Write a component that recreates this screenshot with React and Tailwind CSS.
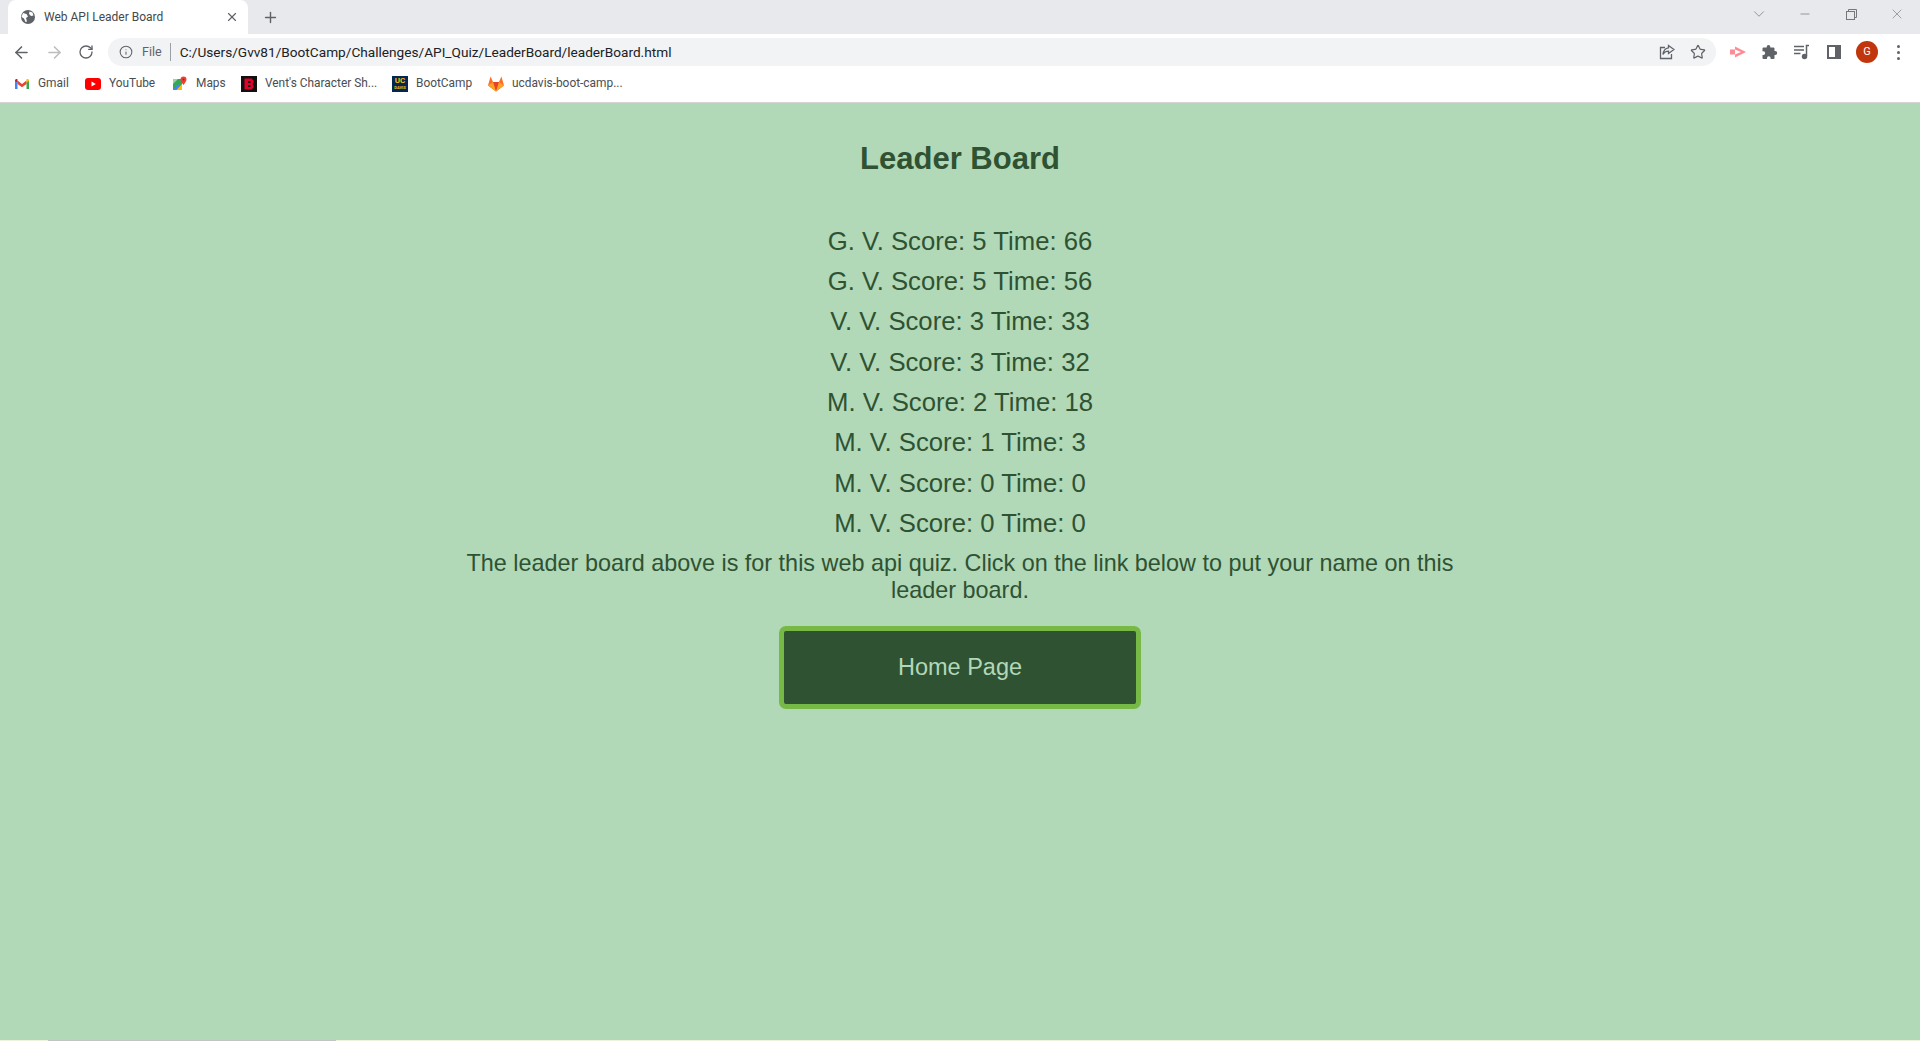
import React from "react";
import { ArrowLeft, ArrowRight, RotateCw, Info, Star, X, Plus, ChevronDown, Minus } from "lucide-react";

const scores = [
  "G. V. Score: 5 Time: 66",
  "G. V. Score: 5 Time: 56",
  "V. V. Score: 3 Time: 33",
  "V. V. Score: 3 Time: 32",
  "M. V. Score: 2 Time: 18",
  "M. V. Score: 1 Time: 3",
  "M. V. Score: 0 Time: 0",
  "M. V. Score: 0 Time: 0",
];

const GmailIcon = () => (
  <svg width="16" height="16" viewBox="0 0 16 16">
    <path d="M1 13V4l2.500 1.500V13z" fill="#4285f4" />
    <path d="M15 13V4l-2.500 1.500V13z" fill="#34a853" />
    <path d="M3.500 8V4.500L8 8l4.500-3.500V8L8 11.300z" fill="#ea4335" />
    <path d="M1 4.500C1 3 2.500 2.500 3.500 3.300V6.500L1 5z" fill="#c5221f" />
    <path d="M15 4.500C15 3 13.500 2.500 12.500 3.300V6.500L15 5z" fill="#fbbc04" />
  </svg>
);

const YoutubeIcon = () => (
  <svg width="16" height="16" viewBox="0 0 16 16">
    <rect x="0" y="2" width="16" height="12" rx="3" fill="#f00" />
    <path d="M6.500 5.500v5L10.800 8z" fill="#fff" />
  </svg>
);

const MapsIcon = () => (
  <svg width="16" height="16" viewBox="0 0 16 16">
    <path d="M1 3h9v11H1z" fill="#34a853" />
    <path d="M1 3h5L1 8z" fill="#9fd0ae" />
    <path d="M1 14l5-6 4 6z" fill="#4285f4" />
    <path d="M4.500 14L10 8v6z" fill="#fbbc04" />
    <path d="M11.500 0.500a3 3 0 0 1 3 3c0 2-3 5.500-3 5.500s-3-3.500-3-5.500a3 3 0 0 1 3-3z" fill="#ea4335" />
    <circle cx="11.500" cy="3.500" r="1" fill="#a52714" />
  </svg>
);

const VentIcon = () => (
  <svg width="16" height="16" viewBox="0 0 16 16">
    <rect width="16" height="16" fill="#111" />
    <path d="M3.500 2.500h7l2 2v2l-1 1.500 1 1.500v2l-2 2h-7zM7 5v2h2.500V5zM7 9v2h2.500V9z" fill="#e4002b" fillRule="evenodd" />
  </svg>
);

const UcIcon = () => (
  <div className="flex h-4 w-4 flex-col items-center justify-center bg-[#022851] text-[#ffbf00]">
    <span className="text-[8px] leading-[8px] font-bold">UC</span>
    <span className="text-[4px] leading-[5px] font-bold">DAVIS</span>
  </div>
);

const GitlabIcon = () => (
  <svg width="16" height="16" viewBox="0 0 16 16">
    <path d="M8 15.500L0 9.500 2.600 0.500 5 6h6l2.400-5.500L16 9.500z" fill="#fc6d26" />
    <path d="M8 15.500L5 6h6z" fill="#e24329" />
    <path d="M8 15.500L0 9.500 5 6zM8 15.500l8-6L11 6z" fill="#fca326" />
  </svg>
);

const GlobeIcon = () => (
  <svg width="16" height="16" viewBox="0 0 16 16">
    <circle cx="8" cy="8" r="7" fill="#5f6368" />
    <path d="M3 4l3.500 1L8 7.500 6 9l1 3.500-1.500.5L4 9.500 1.500 8zM9.500 2.500L12.500 3.500l1 3-2.500.5L9 5z" fill="#fff" />
  </svg>
);

const ShareIcon = () => (
  <svg width="16" height="16" viewBox="0 0 16 16" fill="none" stroke="#5f6368" strokeWidth="1.300">
    <path d="M6 3.500H1.500v11h11V10" />
    <path d="M9.500 1.500L15 5.500 9.500 9.500V7.200C7 7.200 5 8.500 4 10.500 4.300 7 6.500 4.200 9.500 3.800z" />
  </svg>
);

const PinkExtension = () => (
  <svg width="16" height="16" viewBox="0 0 16 16">
    <path d="M5 2.500L16 8 5 13.500V10.500L11 8 5 5.500z" fill="#ff8a94" />
    <rect x="0" y="5.500" width="5" height="5" fill="#ff8a94" />
  </svg>
);

const PuzzleIcon = () => (
  <svg width="16" height="16" viewBox="0 0 16 16">
    <path d="M6.500 1a1.800 1.800 0 0 1 1.800 1.800V3.500h3.200a1 1 0 0 1 1 1v2.600h.7a2 2 0 0 1 0 4h-.7v2.900a1 1 0 0 1-1 1H8.600v-.9a1.800 1.800 0 0 0-3.600 0v.9H1.500a1 1 0 0 1-1-1v-3h.8a1.900 1.900 0 0 0 0-3.800H.5V4.500a1 1 0 0 1 1-1h3.200v-.7A1.800 1.800 0 0 1 6.500 1z" fill="#5f6368" />
  </svg>
);

const MediaIcon = () => (
  <svg width="16" height="16" viewBox="0 0 16 16" fill="none" stroke="#5f6368" strokeWidth="1.500">
    <path d="M0 2.500h10M0 6h10M0 9.500h6.500" />
    <path d="M12.500 12V1.500H15" />
    <circle cx="10.500" cy="12.500" r="2" fill="#5f6368" />
  </svg>
);

const SidePanelIcon = () => (
  <svg width="14" height="14" viewBox="0 0 14 14">
    <path d="M0 0h14v14H0zM2 2v10h6V2z" fill="#5f6368" fillRule="evenodd" />
  </svg>
);

const RestoreIcon = () => (
  <svg width="11" height="11" viewBox="0 0 11 11" fill="none" stroke="#777" strokeWidth="1">
    <rect x="0.500" y="2.500" width="8" height="8" />
    <path d="M2.500 2.500V0.500h8v8H8.500" />
  </svg>
);

const Bookmark = ({ icon, label, className }) => (
  <div className={`flex items-center gap-2 ${className}`}>
    {icon}
    <span className="text-[11.900px] text-[#4a4d51] whitespace-nowrap">{label}</span>
  </div>
);

const App = () => {
  return (
    <div className="flex h-screen flex-col overflow-hidden font-['Roboto',sans-serif]">
      {/* Tab strip */}
      <div className="flex h-[34px] shrink-0 items-center bg-[#e8e9ed]">
        <div className="ml-[8px] flex h-[34px] w-[240px] items-center self-end rounded-t-[8px] bg-white pl-[12px] pr-[9px]">
          <GlobeIcon />
          <span className="ml-[8px] flex-1 text-[12px] text-[#45484c]">Web API Leader Board</span>
          <X size={14} color="#5f6368" strokeWidth={2} />
        </div>
        <Plus size={17} color="#5f6368" strokeWidth={2} className="ml-[14px]" />
        <div className="flex-1" />
        {/* window controls */}
        <div className="mb-[6px] flex items-center">
          <ChevronDown size={18} color="#8a8b8e" strokeWidth={1.2} />
          <Minus size={14} color="#777" strokeWidth={1.2} className="ml-[30px]" />
          <div className="ml-[34px]">
            <RestoreIcon />
          </div>
          <X size={16} color="#777" strokeWidth={1} className="ml-[32px] mr-[15px]" />
        </div>
      </div>

      {/* Toolbar */}
      <div className="flex h-[36px] shrink-0 items-center bg-white">
        <ArrowLeft size={19} color="#5f6368" strokeWidth={2} className="ml-[12px]" />
        <ArrowRight size={19} color="#bcbdbf" strokeWidth={2} className="ml-[14px]" />
        <RotateCw size={16} color="#5f6368" strokeWidth={2} className="ml-[14px]" />
        <div className="ml-[14px] flex h-[28px] w-[1608px] items-center rounded-full bg-[#f1f3f4] pl-[11px] pr-[10px]">
          <Info size={14} color="#5f6368" strokeWidth={1.8} />
          <span className="ml-[9px] text-[12.500px] text-[#5f6368]">File</span>
          <div className="ml-[8px] h-[18px] w-px bg-[#9aa0a6]" />
          <span className="ml-[9px] flex-1 text-[13.650px] text-[#202124]">
            C:/Users/Gvv81/BootCamp/Challenges/API_Quiz/LeaderBoard/leaderBoard.html
          </span>
          <ShareIcon />
          <Star size={16} color="#5f6368" strokeWidth={1.8} className="ml-[15px]" />
        </div>
        <div className="ml-[14px]">
          <PinkExtension />
        </div>
        <div className="ml-[16px]">
          <PuzzleIcon />
        </div>
        <div className="ml-[16px]">
          <MediaIcon />
        </div>
        <div className="ml-[17px]">
          <SidePanelIcon />
        </div>
        <div className="ml-[15px] flex h-[22px] w-[22px] items-center justify-center rounded-full bg-[#c1360c] text-[11px] text-white">
          G
        </div>
        <div className="ml-[19px] flex flex-col gap-[3px]">
          <div className="h-[3px] w-[3px] rounded-full bg-[#5f6368]" />
          <div className="h-[3px] w-[3px] rounded-full bg-[#5f6368]" />
          <div className="h-[3px] w-[3px] rounded-full bg-[#5f6368]" />
        </div>
      </div>

      {/* Bookmarks */}
      <div className="flex h-[33px] shrink-0 items-center border-b border-[#d6d6d6] bg-white pb-[4px] pl-[14px]">
        <Bookmark icon={<GmailIcon />} label="Gmail" className="w-[71px]" />
        <Bookmark icon={<YoutubeIcon />} label="YouTube" className="w-[87px]" />
        <Bookmark icon={<MapsIcon />} label="Maps" className="w-[69px]" />
        <Bookmark icon={<VentIcon />} label="Vent's Character Sh..." className="w-[151px]" />
        <Bookmark icon={<UcIcon />} label="BootCamp" className="w-[96px]" />
        <Bookmark icon={<GitlabIcon />} label="ucdavis-boot-camp..." />
      </div>

      {/* Page */}
      <main className="flex flex-1 flex-col items-center bg-[#b1d8b7] pt-[37px] font-['Liberation_Sans',sans-serif] text-[#2f5233]">
        <h1 className="text-[31px] leading-[37px] font-bold">Leader Board</h1>
        <ul className="mt-[50.500px] flex flex-col gap-[13.400px]">
          {scores.map((s, i) => (
            <li key={i} className="text-center text-[25.700px] leading-[27px]">
              {s}
            </li>
          ))}
        </ul>
        <p className="mt-[13px] max-w-[1000px] text-center text-[23.400px] leading-[26.500px]">
          The leader board above is for this web api quiz. Click on the link below to put your name on this leader board.
        </p>
        <a className="mt-[23px] flex h-[83px] w-[362px] items-center justify-center rounded-[7px] border-[5px] border-[#76b947] bg-[#2f5233] text-[23.500px] text-[#b1d8b7]">
          Home Page
        </a>
      </main>

      {/* Bottom edge */}
      <div className="flex h-px shrink-0 bg-[#eef3df]">
        <div className="ml-[48px] w-[288px] bg-[#c4c4c4]" />
      </div>
    </div>
  );
};

export default App;
